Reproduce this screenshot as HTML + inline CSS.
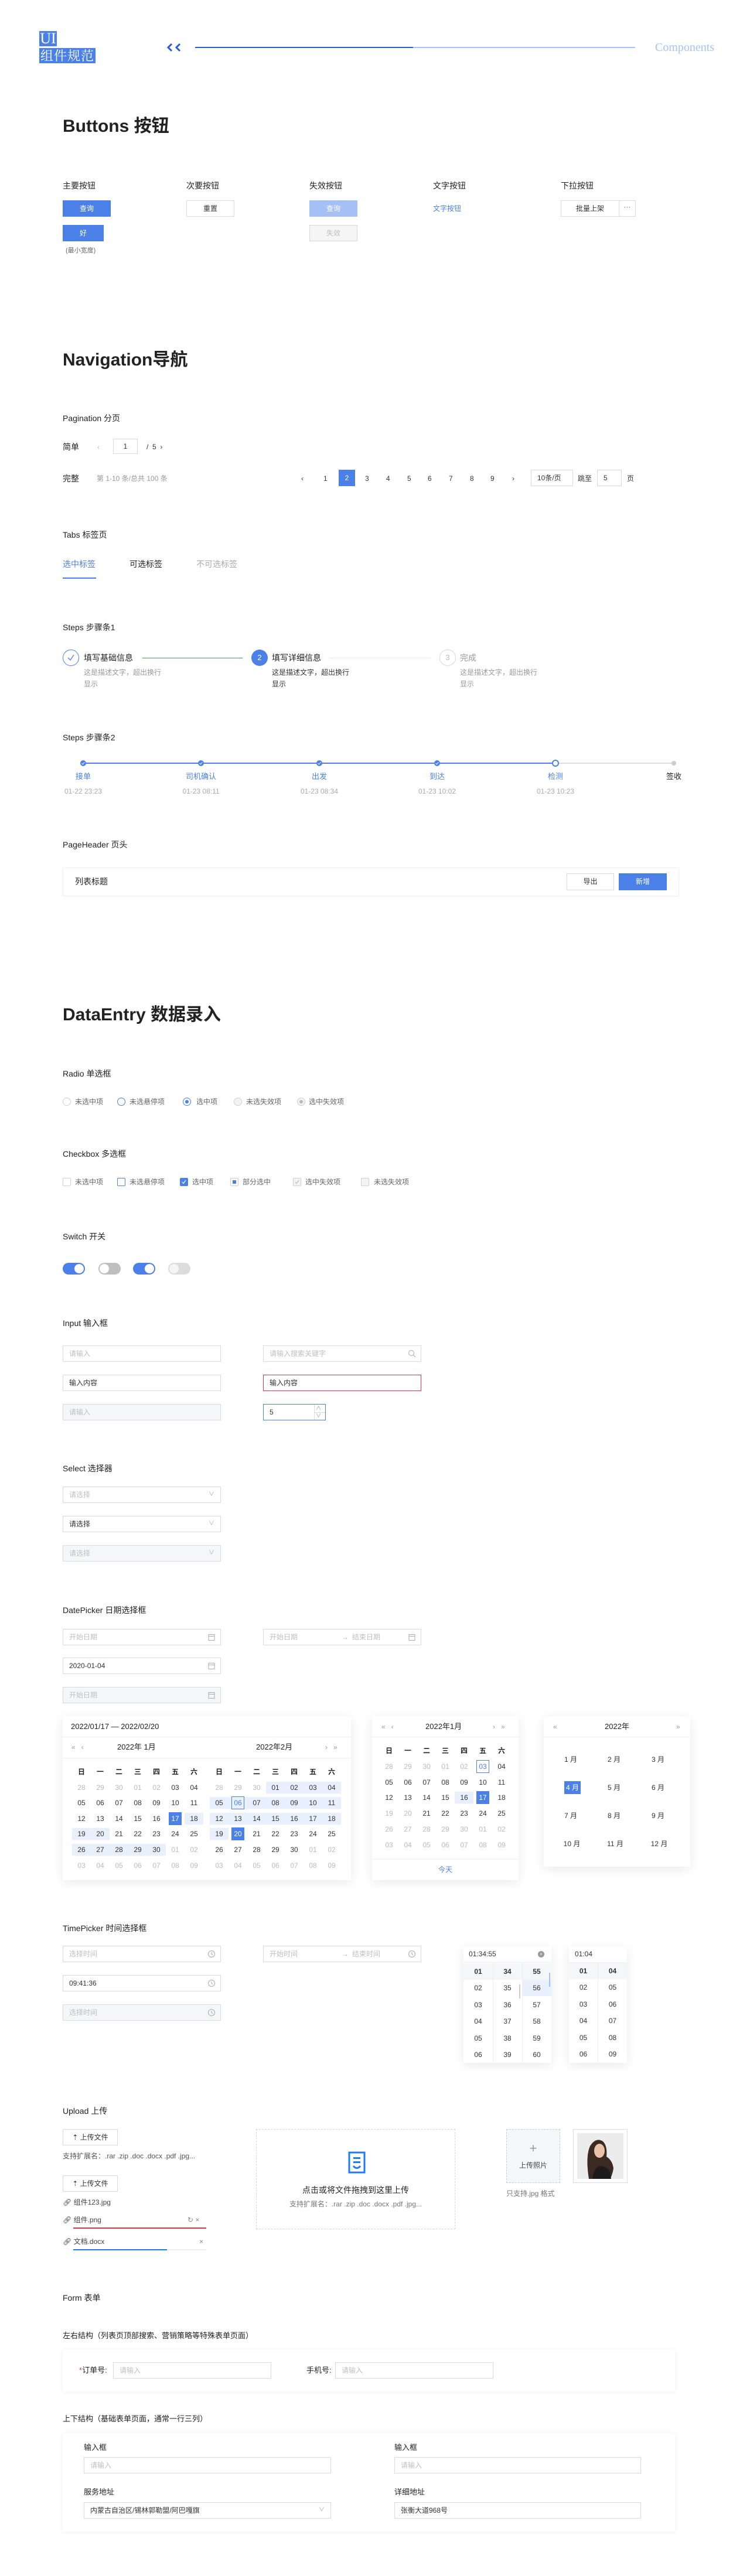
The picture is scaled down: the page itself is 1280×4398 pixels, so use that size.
<!DOCTYPE html>
<html><head><meta charset="utf-8">
<style>
*{margin:0;padding:0;box-sizing:border-box}
body{width:1280px;height:4398px;position:relative;background:#fff;font-family:"Liberation Sans","Noto Sans CJK SC",sans-serif;color:#333;overflow:hidden}
.a{position:absolute}
.h1{position:absolute;left:107px;font-size:30px;font-weight:bold;color:#222;line-height:36px;white-space:nowrap}
.h2{position:absolute;left:107px;font-size:14px;color:#222;line-height:20px;white-space:nowrap}
.t{position:absolute;font-size:12px;line-height:20px;white-space:nowrap}
.inp{position:absolute;height:28px;border:1px solid #d9d9d9;font-size:12px;line-height:26px;padding-left:10px;color:#333;background:#fff;white-space:nowrap}
.ph{color:#bfbfbf}
.dis{background:#f5f6f8}
.btn{position:absolute;height:28px;font-size:12px;line-height:26px;text-align:center;border:1px solid #d9d9d9;background:#fff;color:#333}
.pri{background:#4a80e8;border-color:#4a80e8;color:#fff}
.ico{position:absolute;right:8px;top:6px}
.panel{position:absolute;background:#fff;box-shadow:0 4px 18px rgba(0,0,0,.09)}
.cal{position:absolute;display:grid;grid-template-columns:repeat(7,32px);grid-auto-rows:26.6px;font-size:12px;text-align:center;line-height:26.6px;color:#333}
.cal i{font-style:normal;display:block}
.cal .g{color:#bbb}
.cal .b{background:linear-gradient(transparent 3px,#e8f0fd 3px,#e8f0fd 23.6px,transparent 23.6px)}
.cal b{display:inline-block;width:22px;height:22px;line-height:20px;font-weight:normal;margin-top:2px}
.cal .s b{background:#4a80e8;color:#fff;line-height:22px}
.cal .o b{border:1px solid #4a80e8;color:#4a80e8}
.wk{font-weight:bold;color:#222}
.rd{position:absolute;width:14px;height:14px;border-radius:50%;border:1px solid #d0d0d0;background:#fff}
.cb{position:absolute;width:14px;height:14px;border-radius:2px;border:1px solid #d0d0d0;background:#fff}
.tc{position:absolute;width:50px;font-size:12px;text-align:center;line-height:28.4px;color:#333}
.mo{position:absolute;font-size:12px;width:40px;text-align:center;line-height:22px}
</style></head><body>

<!-- Header -->
<div class="a" style="left:67px;top:53px;width:30px;height:26px;background:#4a80e8;color:#fff;font-family:'Liberation Serif',serif;font-size:26px;line-height:26px;text-align:center">UI</div>
<div class="a" style="left:67px;top:82px;width:96px;height:26px;background:#4a80e8;color:#fff;font-family:'Noto Serif CJK SC',serif;font-size:22px;line-height:26px;text-align:center;letter-spacing:1px">组件规范</div>
<svg class="a" style="left:283px;top:73px" width="30" height="16" viewBox="0 0 30 16"><path d="M10 2 L4 8 L10 14" stroke="#2a5bd7" stroke-width="3" fill="none"/><path d="M24 2 L18 8 L24 14" stroke="#2a5bd7" stroke-width="3" fill="none"/></svg>
<div class="a" style="left:333px;top:80px;width:372px;height:2px;background:#2a5bd7"></div>
<div class="a" style="left:705px;top:80px;width:379px;height:2px;background:#a9c2f5"></div>
<div class="a" style="left:1118px;top:68px;font-family:'Liberation Serif',serif;font-size:20px;color:#a9c2f5;line-height:26px">Components</div>

<!-- Buttons -->
<div class="h1" style="top:198px">Buttons 按钮</div>
<div class="t" style="left:107px;top:307px;font-size:14px;color:#222">主要按钮</div>
<div class="t" style="left:318px;top:307px;font-size:14px;color:#222">次要按钮</div>
<div class="t" style="left:528px;top:307px;font-size:14px;color:#222">失效按钮</div>
<div class="t" style="left:739px;top:307px;font-size:14px;color:#222">文字按钮</div>
<div class="t" style="left:957px;top:307px;font-size:14px;color:#222">下拉按钮</div>
<div class="btn pri" style="left:107px;top:342px;width:82px">查询</div>
<div class="btn pri" style="left:107px;top:384px;width:70px">好</div>
<div class="t" style="left:112px;top:418px;font-size:11px;color:#666">(最小宽度)</div>
<div class="btn" style="left:318px;top:342px;width:82px">重置</div>
<div class="btn" style="left:528px;top:342px;width:82px;background:#a5c0f5;border-color:#a5c0f5;color:#fff">查询</div>
<div class="btn" style="left:528px;top:384px;width:82px;background:#f5f5f5;color:#c0c0c0">失效</div>
<div class="t" style="left:739px;top:346px;color:#4a80e8">文字按钮</div>
<div class="btn" style="left:957px;top:342px;width:100px">批量上架</div>
<div class="btn" style="left:1056px;top:342px;width:29px;line-height:20px;color:#666">···</div>

<!-- Navigation -->
<div class="h1" style="top:597px">Navigation导航</div>
<div class="h2" style="top:704px">Pagination 分页</div>
<div class="t" style="left:107px;top:753px;font-size:14px;color:#222">简单</div>
<div class="t" style="left:166px;top:753px;color:#bbb">‹</div>
<div class="inp" style="left:193px;top:749px;width:42px;height:26px;padding:0;text-align:center;line-height:24px">1</div>
<div class="t" style="left:250px;top:753px;color:#333">/ &nbsp;5 &nbsp;›</div>
<div class="t" style="left:107px;top:807px;font-size:14px;color:#222">完整</div>
<div class="t" style="left:165px;top:807px;color:#999">第 1-10 条/总共 100 条</div>
<div class="t" style="left:514px;top:807px;color:#333">‹</div>
<div class="t" style="left:552px;top:807px">1</div>
<div class="a" style="left:578px;top:802px;width:28px;height:28px;background:#4a80e8;color:#fff;font-size:12px;text-align:center;line-height:28px">2</div>
<div class="t" style="left:623px;top:807px">3</div>
<div class="t" style="left:659px;top:807px">4</div>
<div class="t" style="left:695px;top:807px">5</div>
<div class="t" style="left:730px;top:807px">6</div>
<div class="t" style="left:766px;top:807px">7</div>
<div class="t" style="left:802px;top:807px">8</div>
<div class="t" style="left:837px;top:807px">9</div>
<div class="t" style="left:874px;top:807px">›</div>
<div class="inp" style="left:906px;top:802px;width:72px;padding-left:10px">10条/页</div>
<div class="t" style="left:986px;top:807px">跳至</div>
<div class="inp" style="left:1019px;top:802px;width:42px">5</div>
<div class="t" style="left:1070px;top:807px">页</div>

<div class="h2" style="top:903px">Tabs 标签页</div>
<div class="t" style="left:107px;top:953px;font-size:14px;color:#4a80e8">选中标签</div>
<div class="t" style="left:221px;top:953px;font-size:14px;color:#222">可选标签</div>
<div class="t" style="left:335px;top:953px;font-size:14px;color:#aaa">不可选标签</div>
<div class="a" style="left:107px;top:986px;width:57px;height:2px;background:#4a80e8"></div>

<!-- Steps 1 -->
<div class="h2" style="top:1061px">Steps 步骤条1</div>
<div class="a" style="left:107px;top:1109px;width:28px;height:28px;border-radius:50%;border:1px solid #4a80e8"></div>
<svg class="a" style="left:113px;top:1115px" width="16" height="16"><path d="M3 8 L7 12 L13 3" stroke="#4a80e8" stroke-width="1.3" fill="none"/></svg>
<div class="t" style="left:143px;top:1113px;font-size:14px;color:#222">填写基础信息</div>
<div class="a" style="left:243px;top:1123px;width:171px;height:1px;background:#4a80e8"></div>
<div class="t" style="left:143px;top:1138px;color:#999;white-space:normal;width:140px">这是描述文字，超出换行显示</div>
<div class="a" style="left:429px;top:1109px;width:28px;height:28px;border-radius:50%;background:#4a80e8;color:#fff;font-size:13px;text-align:center;line-height:28px">2</div>
<div class="t" style="left:464px;top:1113px;font-size:14px;color:#222">填写详细信息</div>
<div class="a" style="left:564px;top:1123px;width:171px;height:1px;background:#e6e6e6"></div>
<div class="t" style="left:464px;top:1138px;color:#333;white-space:normal;width:140px">这是描述文字，超出换行显示</div>
<div class="a" style="left:750px;top:1109px;width:28px;height:28px;border-radius:50%;border:1px solid #d6d6d6;color:#bbb;font-size:13px;text-align:center;line-height:26px">3</div>
<div class="t" style="left:785px;top:1113px;font-size:14px;color:#999">完成</div>
<div class="t" style="left:785px;top:1138px;color:#999;white-space:normal;width:140px">这是描述文字，超出换行显示</div>

<!-- Steps 2 -->
<div class="h2" style="top:1249px">Steps 步骤条2</div>
<div class="a" style="left:142px;top:1302px;width:806px;height:2px;background:#4a80e8"></div>
<div class="a" style="left:948px;top:1302px;width:202px;height:2px;background:#ddd"></div>
<svg class="a" style="left:137px;top:1298px" width="10" height="10"><circle cx="5" cy="5" r="5" fill="#4a80e8"/><path d="M2.5 5 L4.3 7 L7.5 3" stroke="#fff" stroke-width="1" fill="none"/></svg>
<svg class="a" style="left:338px;top:1298px" width="10" height="10"><circle cx="5" cy="5" r="5" fill="#4a80e8"/><path d="M2.5 5 L4.3 7 L7.5 3" stroke="#fff" stroke-width="1" fill="none"/></svg>
<svg class="a" style="left:540px;top:1298px" width="10" height="10"><circle cx="5" cy="5" r="5" fill="#4a80e8"/><path d="M2.5 5 L4.3 7 L7.5 3" stroke="#fff" stroke-width="1" fill="none"/></svg>
<svg class="a" style="left:741px;top:1298px" width="10" height="10"><circle cx="5" cy="5" r="5" fill="#4a80e8"/><path d="M2.5 5 L4.3 7 L7.5 3" stroke="#fff" stroke-width="1" fill="none"/></svg>
<div class="a" style="left:942px;top:1297px;width:12px;height:12px;border-radius:50%;border:2px solid #4a80e8;background:#fff"></div>
<div class="a" style="left:1146px;top:1299px;width:8px;height:8px;border-radius:50%;background:#ccc"></div>
<div class="t" style="left:92px;width:100px;text-align:center;top:1316px;font-size:13px;color:#4a80e8">接单</div>
<div class="t" style="left:293px;width:100px;text-align:center;top:1316px;font-size:13px;color:#4a80e8">司机确认</div>
<div class="t" style="left:495px;width:100px;text-align:center;top:1316px;font-size:13px;color:#4a80e8">出发</div>
<div class="t" style="left:696px;width:100px;text-align:center;top:1316px;font-size:13px;color:#4a80e8">到达</div>
<div class="t" style="left:898px;width:100px;text-align:center;top:1316px;font-size:13px;color:#4a80e8">检测</div>
<div class="t" style="left:1100px;width:100px;text-align:center;top:1316px;font-size:13px;color:#222">签收</div>
<div class="t" style="left:92px;width:100px;text-align:center;top:1341px;color:#aaa">01-22 23:23</div>
<div class="t" style="left:293px;width:100px;text-align:center;top:1341px;color:#aaa">01-23 08:11</div>
<div class="t" style="left:495px;width:100px;text-align:center;top:1341px;color:#aaa">01-23 08:34</div>
<div class="t" style="left:696px;width:100px;text-align:center;top:1341px;color:#aaa">01-23 10:02</div>
<div class="t" style="left:898px;width:100px;text-align:center;top:1341px;color:#aaa">01-23 10:23</div>

<!-- PageHeader -->
<div class="h2" style="top:1432px">PageHeader 页头</div>
<div class="a" style="left:107px;top:1481px;width:1052px;height:49px;border:1px solid #f0f0f0;box-shadow:0 1px 4px rgba(0,0,0,.04)"></div>
<div class="t" style="left:128px;top:1495px;font-size:14px;color:#222">列表标题</div>
<div class="btn" style="left:967px;top:1491px;width:81px;height:29px">导出</div>
<div class="btn pri" style="left:1056px;top:1491px;width:82px;height:29px">新增</div>

<!-- DataEntry -->
<div class="h1" style="top:1715px">DataEntry 数据录入</div>
<div class="h2" style="top:1823px">Radio 单选框</div>
<div class="rd" style="left:107px;top:1874px"></div><div class="t" style="left:128px;top:1871px;color:#666">未选中项</div>
<div class="rd" style="left:200px;top:1874px;border-color:#4a80e8"></div><div class="t" style="left:221px;top:1871px;color:#666">未选悬停项</div>
<div class="rd" style="left:312px;top:1874px;border-color:#4a80e8"></div><div class="a" style="left:316px;top:1878px;width:6px;height:6px;border-radius:50%;background:#4a80e8"></div><div class="t" style="left:335px;top:1871px;color:#666">选中项</div>
<div class="rd" style="left:399px;top:1874px;background:#f3f3f3"></div><div class="t" style="left:420px;top:1871px;color:#666">未选失效项</div>
<div class="rd" style="left:507px;top:1874px;background:#f3f3f3"></div><div class="a" style="left:511px;top:1878px;width:6px;height:6px;border-radius:50%;background:#bbb"></div><div class="t" style="left:527px;top:1871px;color:#666">选中失效项</div>

<div class="h2" style="top:1960px">Checkbox 多选框</div>
<div class="cb" style="left:107px;top:2011px"></div><div class="t" style="left:128px;top:2008px;color:#666">未选中项</div>
<div class="cb" style="left:200px;top:2011px;border-color:#4a80e8"></div><div class="t" style="left:221px;top:2008px;color:#666">未选悬停项</div>
<div class="cb" style="left:307px;top:2011px;background:#4a80e8;border-color:#4a80e8"></div><svg class="a" style="left:307px;top:2011px" width="14" height="14"><path d="M4 7 L6 9.5 L10 4" stroke="#fff" stroke-width="1.2" fill="none"/></svg><div class="t" style="left:328px;top:2008px;color:#666">选中项</div>
<div class="cb" style="left:393px;top:2011px"></div><div class="a" style="left:397px;top:2015px;width:6px;height:6px;background:#4a80e8"></div><div class="t" style="left:414px;top:2008px;color:#666">部分选中</div>
<div class="cb" style="left:500px;top:2011px;background:#f3f3f3"></div><svg class="a" style="left:500px;top:2011px" width="14" height="14"><path d="M4 7 L6 9.5 L10 4" stroke="#bbb" stroke-width="1.2" fill="none"/></svg><div class="t" style="left:521px;top:2008px;color:#666">选中失效项</div>
<div class="cb" style="left:616px;top:2011px;background:#f3f3f3"></div><div class="t" style="left:638px;top:2008px;color:#666">未选失效项</div>

<div class="h2" style="top:2101px">Switch 开关</div>
<div class="a" style="left:107px;top:2156px;width:38px;height:20px;border-radius:10px;background:#4a80e8"></div><div class="a" style="left:127px;top:2158px;width:16px;height:16px;border-radius:50%;background:#fff"></div>
<div class="a" style="left:168px;top:2156px;width:38px;height:20px;border-radius:10px;background:#bfbfbf"></div><div class="a" style="left:170px;top:2158px;width:16px;height:16px;border-radius:50%;background:#fff"></div>
<div class="a" style="left:227px;top:2156px;width:38px;height:20px;border-radius:10px;background:#4a80e8"></div><div class="a" style="left:247px;top:2158px;width:16px;height:16px;border-radius:50%;background:#fff"></div>
<div class="a" style="left:287px;top:2156px;width:38px;height:20px;border-radius:10px;background:#dcdcdc"></div><div class="a" style="left:289px;top:2158px;width:16px;height:16px;border-radius:50%;background:#f5f5f5"></div>

<div class="h2" style="top:2249px">Input 输入框</div>
<div class="inp ph" style="left:107px;top:2297px;width:270px">请输入</div>
<div class="inp ph" style="left:449px;top:2297px;width:270px">请输入搜索关键字<svg class="ico" width="14" height="14"><circle cx="6" cy="6" r="4.5" stroke="#aaa" fill="none"/><path d="M9.5 9.5 L13 13" stroke="#aaa"/></svg></div>
<div class="inp" style="left:107px;top:2347px;width:270px">输入内容</div>
<div class="inp" style="left:449px;top:2347px;width:270px;border-color:#e0354a">输入内容</div>
<div class="inp ph dis" style="left:107px;top:2397px;width:270px">请输入</div>
<div class="inp" style="left:449px;top:2397px;width:107px;border-color:#4a80e8">5</div>
<div class="a" style="left:536px;top:2398px;width:1px;height:26px;background:#ddd"></div>
<div class="a" style="left:537px;top:2411px;width:18px;height:1px;background:#ddd"></div>
<div class="t" style="left:539px;top:2394px;font-size:9px;color:#999">∧</div>
<div class="t" style="left:539px;top:2407px;font-size:9px;color:#999">∨</div>

<div class="h2" style="top:2497px">Select 选择器</div>
<div class="inp ph" style="left:107px;top:2538px;width:270px">请选择<span style="position:absolute;right:10px;color:#aaa;font-size:10px">∨</span></div>
<div class="inp" style="left:107px;top:2588px;width:270px">请选择<span style="position:absolute;right:10px;color:#aaa;font-size:10px">∨</span></div>
<div class="inp ph dis" style="left:107px;top:2638px;width:270px">请选择<span style="position:absolute;right:10px;color:#aaa;font-size:10px">∨</span></div>

<!-- DatePicker -->
<div class="h2" style="top:2739px">DatePicker 日期选择框</div>
<div class="inp ph" style="left:107px;top:2781px;width:270px">开始日期<svg class="ico" width="14" height="14"><rect x="2" y="2.5" width="10" height="10" stroke="#aaa" fill="none"/><path d="M2 5.5 H12" stroke="#aaa"/></svg></div>
<div class="inp ph" style="left:449px;top:2781px;width:270px">开始日期<span style="position:absolute;left:133px;color:#aaa">→</span><span style="position:absolute;left:151px">结束日期</span><svg class="ico" width="14" height="14"><rect x="2" y="2.5" width="10" height="10" stroke="#aaa" fill="none"/><path d="M2 5.5 H12" stroke="#aaa"/></svg></div>
<div class="inp" style="left:107px;top:2830px;width:270px">2020-01-04<svg class="ico" width="14" height="14"><rect x="2" y="2.5" width="10" height="10" stroke="#aaa" fill="none"/><path d="M2 5.5 H12" stroke="#aaa"/></svg></div>
<div class="inp ph dis" style="left:107px;top:2880px;width:270px">开始日期<svg class="ico" width="14" height="14"><rect x="2" y="2.5" width="10" height="10" stroke="#aaa" fill="none"/><path d="M2 5.5 H12" stroke="#aaa"/></svg></div>

<!-- Range panel -->
<div class="panel" style="left:107px;top:2930px;width:492px;height:280px"></div>
<div class="t" style="left:121px;top:2938px;font-size:13px;color:#222">2022/01/17 — 2022/02/20</div>
<div class="a" style="left:107px;top:2965px;width:492px;height:1px;background:#eee"></div>
<div class="t" style="left:122px;top:2973px;color:#999">«&nbsp;&nbsp;&nbsp;‹</div>
<div class="t" style="left:200px;top:2973px;font-size:13px;color:#222">2022年 1月</div>
<div class="t" style="left:437px;top:2973px;font-size:13px;color:#222">2022年2月</div>
<div class="t" style="left:555px;top:2973px;color:#999">›&nbsp;&nbsp;&nbsp;»</div>
<div class="a" style="left:107px;top:3001px;width:492px;height:1px;background:#eee"></div>
<div class="cal" style="left:123px;top:3012px">
<i class="wk">日</i><i class="wk">一</i><i class="wk">二</i><i class="wk">三</i><i class="wk">四</i><i class="wk">五</i><i class="wk">六</i>
<i class="g">28</i><i class="g">29</i><i class="g">30</i><i class="g">01</i><i class="g">02</i><i>03</i><i>04</i>
<i>05</i><i>06</i><i>07</i><i>08</i><i>09</i><i>10</i><i>11</i>
<i>12</i><i>13</i><i>14</i><i>15</i><i>16</i><i class="s"><b>17</b></i><i class="b">18</i>
<i class="b">19</i><i class="b">20</i><i>21</i><i>22</i><i>23</i><i>24</i><i>25</i>
<i class="b">26</i><i class="b">27</i><i class="b">28</i><i class="b">29</i><i class="b">30</i><i class="g">01</i><i class="g">02</i>
<i class="g">03</i><i class="g">04</i><i class="g">05</i><i class="g">06</i><i class="g">07</i><i class="g">08</i><i class="g">09</i>
</div>
<div class="cal" style="left:358px;top:3012px">
<i class="wk">日</i><i class="wk">一</i><i class="wk">二</i><i class="wk">三</i><i class="wk">四</i><i class="wk">五</i><i class="wk">六</i>
<i class="g">28</i><i class="g">29</i><i class="g">30</i><i class="b">01</i><i class="b">02</i><i class="b">03</i><i class="b">04</i>
<i class="b">05</i><i class="b o"><b>06</b></i><i class="b">07</i><i class="b">08</i><i class="b">09</i><i class="b">10</i><i class="b">11</i>
<i class="b">12</i><i class="b">13</i><i class="b">14</i><i class="b">15</i><i class="b">16</i><i class="b">17</i><i class="b">18</i>
<i class="b">19</i><i class="s"><b>20</b></i><i>21</i><i>22</i><i>23</i><i>24</i><i>25</i>
<i>26</i><i>27</i><i>28</i><i>29</i><i>30</i><i class="g">01</i><i class="g">02</i>
<i class="g">03</i><i class="g">04</i><i class="g">05</i><i class="g">06</i><i class="g">07</i><i class="g">08</i><i class="g">09</i>
</div>

<!-- Single month panel -->
<div class="panel" style="left:635px;top:2930px;width:250px;height:280px"></div>
<div class="t" style="left:651px;top:2938px;color:#999">«&nbsp;&nbsp;&nbsp;‹</div>
<div class="t" style="left:726px;top:2938px;font-size:13px;color:#222">2022年1月</div>
<div class="t" style="left:841px;top:2938px;color:#999">›&nbsp;&nbsp;&nbsp;»</div>
<div class="a" style="left:635px;top:2965px;width:250px;height:1px;background:#eee"></div>
<div class="cal" style="left:648px;top:2976px;grid-auto-rows:26.8px;line-height:26.8px">
<i class="wk">日</i><i class="wk">一</i><i class="wk">二</i><i class="wk">三</i><i class="wk">四</i><i class="wk">五</i><i class="wk">六</i>
<i class="g">28</i><i class="g">29</i><i class="g">30</i><i class="g">01</i><i class="g">02</i><i class="o"><b>03</b></i><i>04</i>
<i>05</i><i>06</i><i>07</i><i>08</i><i>09</i><i>10</i><i>11</i>
<i>12</i><i>13</i><i>14</i><i>15</i><i class="b">16</i><i class="s"><b>17</b></i><i>18</i>
<i class="g">19</i><i class="g">20</i><i>21</i><i>22</i><i>23</i><i>24</i><i>25</i>
<i class="g">26</i><i class="g">27</i><i class="g">28</i><i class="g">29</i><i class="g">30</i><i class="g">01</i><i class="g">02</i>
<i class="g">03</i><i class="g">04</i><i class="g">05</i><i class="g">06</i><i class="g">07</i><i class="g">08</i><i class="g">09</i>
</div>
<div class="a" style="left:635px;top:3174px;width:250px;height:1px;background:#eee"></div>
<div class="t" style="left:635px;width:250px;text-align:center;top:3182px;color:#4a80e8">今天</div>

<!-- Month panel -->
<div class="panel" style="left:928px;top:2930px;width:250px;height:257px"></div>
<div class="t" style="left:944px;top:2938px;color:#999">«</div>
<div class="t" style="left:1023px;width:60px;text-align:center;top:2938px;font-size:13px;color:#222">2022年</div>
<div class="t" style="left:1154px;top:2938px;color:#999">»</div>
<div class="a" style="left:928px;top:2965px;width:250px;height:1px;background:#eee"></div>
<div class="mo" style="left:954px;top:2993px">1 月</div><div class="mo" style="left:1028px;top:2993px">2 月</div><div class="mo" style="left:1103px;top:2993px">3 月</div>
<div class="mo" style="left:963px;top:3041px;width:28px;background:#4a80e8;color:#fff">4 月</div><div class="mo" style="left:1028px;top:3041px">5 月</div><div class="mo" style="left:1103px;top:3041px">6 月</div>
<div class="mo" style="left:954px;top:3089px">7 月</div><div class="mo" style="left:1028px;top:3089px">8 月</div><div class="mo" style="left:1103px;top:3089px">9 月</div>
<div class="mo" style="left:956px;top:3137px">10 月</div><div class="mo" style="left:1030px;top:3137px">11 月</div><div class="mo" style="left:1105px;top:3137px">12 月</div>

<!-- TimePicker -->
<div class="h2" style="top:3282px">TimePicker 时间选择框</div>
<div class="inp ph" style="left:107px;top:3322px;width:270px">选择时间<svg class="ico" width="14" height="14"><circle cx="7" cy="7" r="5.5" stroke="#aaa" fill="none"/><path d="M7 4 V7 L9 9" stroke="#aaa" fill="none"/></svg></div>
<div class="inp ph" style="left:449px;top:3322px;width:270px">开始时间<span style="position:absolute;left:133px;color:#aaa">→</span><span style="position:absolute;left:151px">结束时间</span><svg class="ico" width="14" height="14"><circle cx="7" cy="7" r="5.5" stroke="#aaa" fill="none"/><path d="M7 4 V7 L9 9" stroke="#aaa" fill="none"/></svg></div>
<div class="inp" style="left:107px;top:3372px;width:270px">09:41:36<svg class="ico" width="14" height="14"><circle cx="7" cy="7" r="5.5" stroke="#aaa" fill="none"/><path d="M7 4 V7 L9 9" stroke="#aaa" fill="none"/></svg></div>
<div class="inp ph dis" style="left:107px;top:3422px;width:270px">选择时间<svg class="ico" width="14" height="14"><circle cx="7" cy="7" r="5.5" stroke="#aaa" fill="none"/><path d="M7 4 V7 L9 9" stroke="#aaa" fill="none"/></svg></div>

<div class="panel" style="left:791px;top:3323px;width:150px;height:199px"></div>
<div class="t" style="left:800px;top:3326px;color:#333">01:34:55</div>
<div class="a" style="left:918px;top:3331px;width:11px;height:11px;border-radius:50%;background:#999;color:#fff;font-size:8px;line-height:11px;text-align:center">×</div>
<div class="a" style="left:791px;top:3350px;width:150px;height:1px;background:#eee"></div>
<div class="a" style="left:791px;top:3352px;width:150px;height:28px;background:#f5f6f8"></div>
<div class="a" style="left:891px;top:3380px;width:50px;height:28px;background:#e8f0fd"></div>
<div class="a" style="left:841px;top:3351px;width:1px;height:171px;background:#eee"></div>
<div class="a" style="left:891px;top:3351px;width:1px;height:171px;background:#eee"></div>
<div class="a" style="left:886px;top:3388px;width:2px;height:24px;background:#ccc"></div>
<div class="a" style="left:937px;top:3368px;width:2px;height:24px;background:#a9c2f5"></div>
<div class="tc" style="left:791px;top:3352px"><b style="font-weight:bold">01</b><br>02<br>03<br>04<br>05<br>06</div>
<div class="tc" style="left:841px;top:3352px"><b>34</b><br>35<br>36<br>37<br>38<br>39</div>
<div class="tc" style="left:891px;top:3352px"><b>55</b><br>56<br>57<br>58<br>59<br>60</div>

<div class="panel" style="left:971px;top:3323px;width:99px;height:199px"></div>
<div class="t" style="left:981px;top:3326px;color:#333">01:04</div>
<div class="a" style="left:971px;top:3350px;width:99px;height:1px;background:#eee"></div>
<div class="a" style="left:971px;top:3351px;width:99px;height:28px;background:#f5f6f8"></div>
<div class="a" style="left:1020px;top:3351px;width:1px;height:171px;background:#eee"></div>
<div class="tc" style="left:971px;top:3351px;width:49px"><b>01</b><br>02<br>03<br>04<br>05<br>06</div>
<div class="tc" style="left:1021px;top:3351px;width:49px"><b>04</b><br>05<br>06<br>07<br>08<br>09</div>

<!-- Upload -->
<div class="h2" style="top:3594px">Upload 上传</div>
<div class="btn" style="left:107px;top:3635px;width:94px">⇡ 上传文件</div>
<div class="t" style="left:107px;top:3671px;color:#555">支持扩展名：.rar .zip .doc .docx .pdf .jpg...</div>
<div class="btn" style="left:107px;top:3714px;width:94px">⇡ 上传文件</div>
<div class="t" style="left:107px;top:3750px;color:#444">🔗︎ 组件123.jpg</div>
<div class="t" style="left:107px;top:3780px;color:#444">🔗︎ 组件.png</div>
<div class="t" style="left:320px;top:3780px;color:#888">↻ ×</div>
<div class="a" style="left:125px;top:3803px;width:227px;height:2px;background:#f0303a"></div>
<div class="t" style="left:107px;top:3817px;color:#444">🔗︎ 文档.docx</div>
<div class="t" style="left:340px;top:3817px;color:#888">×</div>
<div class="a" style="left:125px;top:3840px;width:227px;height:2px;background:#eee"></div>
<div class="a" style="left:125px;top:3840px;width:160px;height:2px;background:#1e7bf0"></div>

<div class="a" style="left:437px;top:3635px;width:340px;height:171px;border:1px dashed #d6d6d6"></div>
<svg class="a" style="left:594px;top:3673px" width="30" height="38" viewBox="0 0 30 38"><path d="M2 2 H28 V36 H2 Z" fill="none" stroke="#1e7bf0" stroke-width="3"/><rect x="9" y="10" width="12" height="3" fill="#1e7bf0"/><rect x="9" y="17" width="12" height="3" fill="#1e7bf0"/><path d="M9 25 Q15 32 21 25" fill="none" stroke="#1e7bf0" stroke-width="3"/></svg>
<div class="t" style="left:437px;width:340px;text-align:center;top:3729px;font-size:14px;color:#222">点击或将文件拖拽到这里上传</div>
<div class="t" style="left:437px;width:340px;text-align:center;top:3753px;color:#777">支持扩展名：.rar .zip .doc .docx .pdf .jpg...</div>

<div class="a" style="left:864px;top:3635px;width:92px;height:92px;border:1px dashed #ccc;background:#f5f6f8"></div>
<div class="t" style="left:864px;width:92px;text-align:center;top:3656px;font-size:22px;line-height:24px;color:#999">+</div>
<div class="t" style="left:864px;width:92px;text-align:center;top:3687px;color:#444">上传照片</div>
<div class="a" style="left:978px;top:3635px;width:93px;height:92px;border:1px solid #ddd;background:#fff"></div>
<svg class="a" style="left:985px;top:3642px" width="79" height="78" viewBox="0 0 79 78"><rect width="79" height="78" fill="#ececec"/><path d="M20 78 Q14 40 22 22 Q32 6 44 14 Q52 22 50 40 Q60 46 62 60 Q60 72 56 78 Z" fill="#3a2a20"/><ellipse cx="38" cy="30" rx="9" ry="12" fill="#e8c3a8"/><path d="M26 78 Q28 60 38 56 Q50 56 56 66 L58 78 Z" fill="#1c1c1c"/></svg>
<div class="t" style="left:864px;top:3735px;color:#777">只支持.jpg 格式</div>

<!-- Form -->
<div class="h2" style="top:3913px">Form 表单</div>
<div class="t" style="left:107px;top:3978px;font-size:13px;color:#222">左右结构（列表页顶部搜索、营销策略等特殊表单页面）</div>
<div class="a" style="left:107px;top:4012px;width:1045px;height:71px;box-shadow:0 1px 8px rgba(0,0,0,.07);background:#fff"></div>
<div class="t" style="left:135px;top:4037px;font-size:13px;color:#222"><span style="color:#e0354a">*</span>订单号:</div>
<div class="inp ph" style="left:193px;top:4033px;width:270px">请输入</div>
<div class="t" style="left:523px;top:4037px;font-size:13px;color:#222">手机号:</div>
<div class="inp ph" style="left:572px;top:4033px;width:270px">请输入</div>

<div class="t" style="left:107px;top:4120px;font-size:13px;color:#222">上下结构（基础表单页面，通常一行三列）</div>
<div class="a" style="left:107px;top:4154px;width:1045px;height:168px;box-shadow:0 1px 8px rgba(0,0,0,.07);background:#fff"></div>
<div class="t" style="left:143px;top:4169px;font-size:13px;color:#222">输入框</div>
<div class="t" style="left:673px;top:4169px;font-size:13px;color:#222">输入框</div>
<div class="inp ph" style="left:143px;top:4195px;width:422px">请输入</div>
<div class="inp ph" style="left:673px;top:4195px;width:421px">请输入</div>
<div class="t" style="left:143px;top:4245px;font-size:13px;color:#222">服务地址</div>
<div class="t" style="left:673px;top:4245px;font-size:13px;color:#222">详细地址</div>
<div class="inp" style="left:143px;top:4272px;width:422px">内蒙古自治区/锡林郭勒盟/阿巴嘎旗<span style="position:absolute;right:10px;color:#aaa;font-size:10px">∨</span></div>
<div class="inp" style="left:673px;top:4272px;width:421px">张衡大道968号</div>

</body></html>
